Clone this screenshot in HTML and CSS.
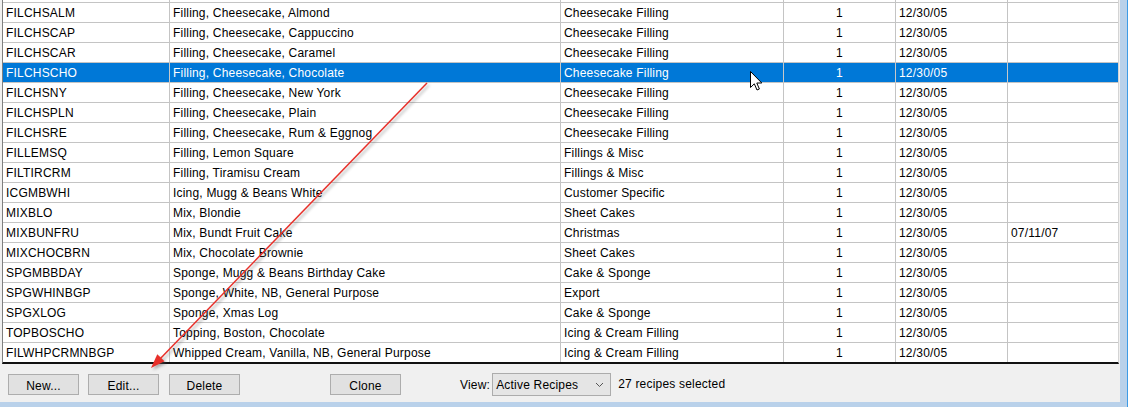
FILE: index.html
```html
<!DOCTYPE html>
<html>
<head>
<meta charset="utf-8">
<link rel="stylesheet" href="styles.css">
</head>
<body>
<div class="window">
  <div class="main">
    <div class="viewport">
      <div class="rows">
        <div class="row"><div class="cell"></div><div class="cell"></div><div class="cell"></div><div class="cell"></div><div class="cell"></div><div class="cell"></div></div>
        <div class="row"><div class="cell">FILCHSALM</div><div class="cell">Filling, Cheesecake, Almond</div><div class="cell">Cheesecake Filling</div><div class="cell num">1</div><div class="cell">12/30/05</div><div class="cell"></div></div>
        <div class="row"><div class="cell">FILCHSCAP</div><div class="cell">Filling, Cheesecake, Cappuccino</div><div class="cell">Cheesecake Filling</div><div class="cell num">1</div><div class="cell">12/30/05</div><div class="cell"></div></div>
        <div class="row"><div class="cell">FILCHSCAR</div><div class="cell">Filling, Cheesecake, Caramel</div><div class="cell">Cheesecake Filling</div><div class="cell num">1</div><div class="cell">12/30/05</div><div class="cell"></div></div>
        <div class="row sel"><div class="cell">FILCHSCHO</div><div class="cell">Filling, Cheesecake, Chocolate</div><div class="cell">Cheesecake Filling</div><div class="cell num">1</div><div class="cell">12/30/05</div><div class="cell"></div></div>
        <div class="row"><div class="cell">FILCHSNY</div><div class="cell">Filling, Cheesecake, New York</div><div class="cell">Cheesecake Filling</div><div class="cell num">1</div><div class="cell">12/30/05</div><div class="cell"></div></div>
        <div class="row"><div class="cell">FILCHSPLN</div><div class="cell">Filling, Cheesecake, Plain</div><div class="cell">Cheesecake Filling</div><div class="cell num">1</div><div class="cell">12/30/05</div><div class="cell"></div></div>
        <div class="row"><div class="cell">FILCHSRE</div><div class="cell">Filling, Cheesecake, Rum &amp; Eggnog</div><div class="cell">Cheesecake Filling</div><div class="cell num">1</div><div class="cell">12/30/05</div><div class="cell"></div></div>
        <div class="row"><div class="cell">FILLEMSQ</div><div class="cell">Filling, Lemon Square</div><div class="cell">Fillings &amp; Misc</div><div class="cell num">1</div><div class="cell">12/30/05</div><div class="cell"></div></div>
        <div class="row"><div class="cell">FILTIRCRM</div><div class="cell">Filling, Tiramisu Cream</div><div class="cell">Fillings &amp; Misc</div><div class="cell num">1</div><div class="cell">12/30/05</div><div class="cell"></div></div>
        <div class="row"><div class="cell">ICGMBWHI</div><div class="cell">Icing, Mugg &amp; Beans White</div><div class="cell">Customer Specific</div><div class="cell num">1</div><div class="cell">12/30/05</div><div class="cell"></div></div>
        <div class="row"><div class="cell">MIXBLO</div><div class="cell">Mix, Blondie</div><div class="cell">Sheet Cakes</div><div class="cell num">1</div><div class="cell">12/30/05</div><div class="cell"></div></div>
        <div class="row"><div class="cell">MIXBUNFRU</div><div class="cell">Mix, Bundt Fruit Cake</div><div class="cell">Christmas</div><div class="cell num">1</div><div class="cell">12/30/05</div><div class="cell">07/11/07</div></div>
        <div class="row"><div class="cell">MIXCHOCBRN</div><div class="cell">Mix, Chocolate Brownie</div><div class="cell">Sheet Cakes</div><div class="cell num">1</div><div class="cell">12/30/05</div><div class="cell"></div></div>
        <div class="row"><div class="cell">SPGMBBDAY</div><div class="cell">Sponge, Mugg &amp; Beans Birthday Cake</div><div class="cell">Cake &amp; Sponge</div><div class="cell num">1</div><div class="cell">12/30/05</div><div class="cell"></div></div>
        <div class="row"><div class="cell">SPGWHINBGP</div><div class="cell">Sponge, White, NB, General Purpose</div><div class="cell">Export</div><div class="cell num">1</div><div class="cell">12/30/05</div><div class="cell"></div></div>
        <div class="row"><div class="cell">SPGXLOG</div><div class="cell">Sponge, Xmas Log</div><div class="cell">Cake &amp; Sponge</div><div class="cell num">1</div><div class="cell">12/30/05</div><div class="cell"></div></div>
        <div class="row"><div class="cell">TOPBOSCHO</div><div class="cell">Topping, Boston, Chocolate</div><div class="cell">Icing &amp; Cream Filling</div><div class="cell num">1</div><div class="cell">12/30/05</div><div class="cell"></div></div>
        <div class="row"><div class="cell">FILWHPCRMNBGP</div><div class="cell">Whipped Cream, Vanilla, NB, General Purpose</div><div class="cell">Icing &amp; Cream Filling</div><div class="cell num">1</div><div class="cell">12/30/05</div><div class="cell"></div></div>
      </div>
    </div>
    <div class="toolbar">
      <button class="btn btn-new">New...</button>
      <button class="btn btn-edit">Edit...</button>
      <button class="btn btn-delete">Delete</button>
      <button class="btn btn-clone">Clone</button>
      <span class="label view-label">View:</span>
      <div class="select">
        <span>Active Recipes</span>
        <svg class="chev" width="9" height="6" viewBox="0 0 9 6"><path d="M1 1 L4.5 4.5 L8 1" fill="none" stroke="#555" stroke-width="1"/></svg>
      </div>
      <span class="label count">27 recipes selected</span>
    </div>
    <div class="frame-bottom"></div>
  </div>
  <div class="frame-right"></div>

  <svg class="overlay" width="1128" height="407" viewBox="0 0 1128 407">
    <defs>
      <filter id="sh" x="-20%" y="-20%" width="140%" height="140%">
        <feGaussianBlur stdDeviation="1.5"/>
      </filter>
    </defs>
    <g transform="translate(2,2)" opacity="0.45" filter="url(#sh)">
      <line x1="427" y1="83" x2="158" y2="361" stroke="#555" stroke-width="1.6"/>
      <polygon points="151,368 164.5,361.2 157.3,354.2" fill="#555"/>
    </g>
    <line x1="427" y1="83" x2="158" y2="361" stroke="#e8302a" stroke-width="1.5"/>
    <polygon points="151,368 164.5,361.2 157.3,354.2" fill="#e8302a"/>
  </svg>

  <svg class="cursor" width="14" height="21" viewBox="0 0 14 21">
    <path d="M0.5 0.5 L0.5 16.5 L4.3 12.8 L7 19 L9.4 18 L6.8 12 L11.8 12 Z" fill="#fff" stroke="#000" stroke-width="1" stroke-linejoin="miter"/>
  </svg>
</div>
</body>
</html>
```

FILE: styles.css
```css
* {
  box-sizing: border-box;
}

html, body {
  margin: 0;
  padding: 0;
}

body {
  width: 1128px;
  height: 407px;
  overflow: hidden;
  background: #f0f0f0;
  font-family: "Liberation Sans", Arial, sans-serif;
  font-size: 12px;
  letter-spacing: 0.2px;
  color: #000;
}

.window {
  position: relative;
  display: flex;
  width: 1128px;
  height: 407px;
}

.main {
  width: 1120px;
  display: flex;
  flex-direction: column;
}

.viewport {
  margin-left: 2px;
  width: 1117px;
  height: 364px;
  background: #fff;
  border-left: 1px solid #7f7f7f;
  border-right: 1px solid #d4d4d4;
  border-bottom: 2px solid #111;
  overflow: hidden;
}

.rows {
  margin-top: -17px;
}

.row {
  display: grid;
  grid-template-columns: 167px 391px 223px 112px 112px 110px;
}

.cell {
  height: 20px;
  line-height: 21px;
  padding-left: 3px;
  border-bottom: 1px solid #c4c4c4;
  border-right: 1px solid #c4c4c4;
  white-space: nowrap;
  overflow: hidden;
}

.cell:last-child {
  border-right: none;
}

.cell.num {
  text-align: center;
  padding-left: 0;
  padding-right: 0;
}

.row.sel .cell {
  background: #0078d7;
  color: #fff;
  border-right-color: #c8c8c8;
}

.toolbar {
  height: 38px;
  display: flex;
  align-items: flex-start;
  padding-top: 10px;
  padding-left: 8px;
}

.btn {
  width: 71px;
  height: 21px;
  padding: 0;
  margin: 0;
  background: #e1e1e1;
  border: 1px solid #adadad;
  font-family: inherit;
  font-size: 12px;
  letter-spacing: 0.2px;
  color: #000;
  line-height: 20px;
  padding-top: 1px;
}

.btn-edit {
  margin-left: 9px;
}

.btn-delete {
  margin-left: 10px;
}

.btn-clone {
  margin-left: 90px;
}

.label {
  line-height: 22px;
}

.view-label {
  margin-left: 59px;
}

.select {
  margin-left: 2px;
  margin-top: -1px;
  width: 119px;
  height: 23px;
  background: #e5e5e5;
  border: 1px solid #acacac;
  display: flex;
  align-items: center;
  justify-content: space-between;
  padding-left: 3px;
  padding-right: 6px;
  padding-top: 1px;
  line-height: 21px;
}

.chev {
  display: block;
}

.count {
  margin-left: 7px;
  margin-top: -1px;
}

.frame-bottom {
  height: 5px;
  background: #b9d1ea;
  margin-top: auto;
}

.frame-right {
  width: 8px;
  height: 407px;
  background: #b9d1ea;
  border-right: 1px solid #3d9be6;
}

.overlay {
  position: absolute;
  left: 0;
  top: 0;
  pointer-events: none;
}

.cursor {
  position: absolute;
  left: 750px;
  top: 71px;
  pointer-events: none;
}
```
